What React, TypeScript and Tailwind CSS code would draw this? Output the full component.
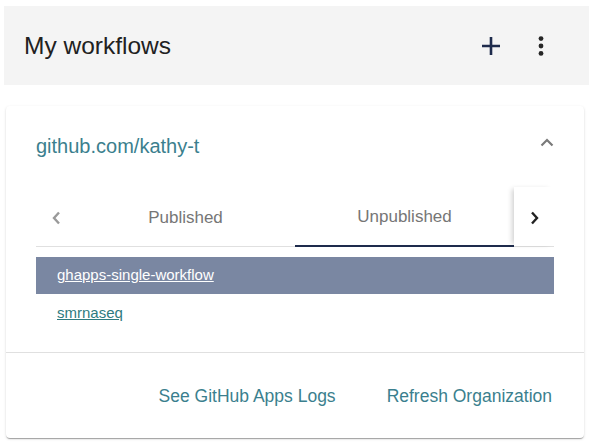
import React from "react";

export default function App() {
  return (
    <div
      className="w-[593px] h-[444px] bg-white overflow-hidden"
      style={{ fontFamily: "'Liberation Sans', Arial, sans-serif" }}
    >
      <div className="pt-[6px] px-[4px]">
        <div className="h-[79px] bg-[#f4f4f4] flex items-center justify-between pl-[20px] pr-[45px]">
          <div className="text-[24.5px] text-[#212121] leading-none pt-[2px]">My workflows</div>
          <div className="flex items-center gap-[38px]">
            <svg width="18" height="18" viewBox="0 0 18 18">
              <path d="M9 0V18M0 9H18" stroke="#1e2b4c" strokeWidth="2.6" />
            </svg>
            <svg width="6" height="20" viewBox="0 0 6 20">
              <circle cx="3" cy="2.6" r="2.4" fill="#262626" />
              <circle cx="3" cy="10" r="2.4" fill="#262626" />
              <circle cx="3" cy="17.4" r="2.4" fill="#262626" />
            </svg>
          </div>
        </div>
      </div>

      <div className="mt-[21px] mx-[6px] w-[578px] h-[332px] rounded-[4px] bg-white shadow-[0_2px_1px_-1px_rgba(0,0,0,0.2),0_1px_1px_0_rgba(0,0,0,0.14),0_1px_3px_0_rgba(0,0,0,0.12)] flex flex-col">
        <div className="px-[30px]">
          <div className="h-[80px] flex items-center justify-between">
            <div className="text-[20px] text-[#3b7f8e] leading-none">github.com/kathy-t</div>
            <svg width="14" height="9" viewBox="0 0 14 9" className="-mt-[8px]">
              <path d="M1.5 7.5L7 2L12.5 7.5" stroke="#7a7a7a" strokeWidth="2.2" fill="none" />
            </svg>
          </div>
          <div className="mt-[1px] border-b border-[#e0e0e0] flex h-[60px]">
            <div className="w-[40px] flex items-center justify-center pt-[2px]">
              <svg width="9" height="14" viewBox="0 0 9 14">
                <path d="M7 1.5L2 7L7 12.5" stroke="#9a9a9a" strokeWidth="2.4" fill="none" />
              </svg>
            </div>
            <div className="w-[219px] flex items-center justify-center text-[17px] text-[#767676] pt-[2px]">
              Published
            </div>
            <div className="w-[219px] flex items-center justify-center text-[17px] text-[#767676] pt-[2px] border-b-2 border-[#1e2b4c] -mb-px">
              Unpublished
            </div>
            <div className="w-[40px] flex items-center justify-center pt-[2px] shadow-[-4px_0_5px_-2px_rgba(0,0,0,0.18)] relative">
              <svg width="9" height="14" viewBox="0 0 9 14">
                <path d="M2 1.5L7 7L2 12.5" stroke="#222" strokeWidth="2.4" fill="none" />
              </svg>
            </div>
          </div>
          <div className="mt-[10px]">
            <div className="h-[37px] bg-[#7a87a2] flex items-center pl-[21px] text-[15px] text-white underline">
              ghapps-single-workflow
            </div>
            <div className="h-[37px] flex items-center pl-[21px] text-[15px] text-[#2f7b80] underline pt-[2px]">
              smrnaseq
            </div>
          </div>
        </div>
        <div className="mt-auto h-[86px] border-t border-[#e0e0e0] flex items-center justify-end pr-[32px] gap-[51px] text-[17.5px] text-[#3b7f8e] pt-[2px]">
          <span>See GitHub Apps Logs</span>
          <span>Refresh Organization</span>
        </div>
      </div>
    </div>
  );
}
